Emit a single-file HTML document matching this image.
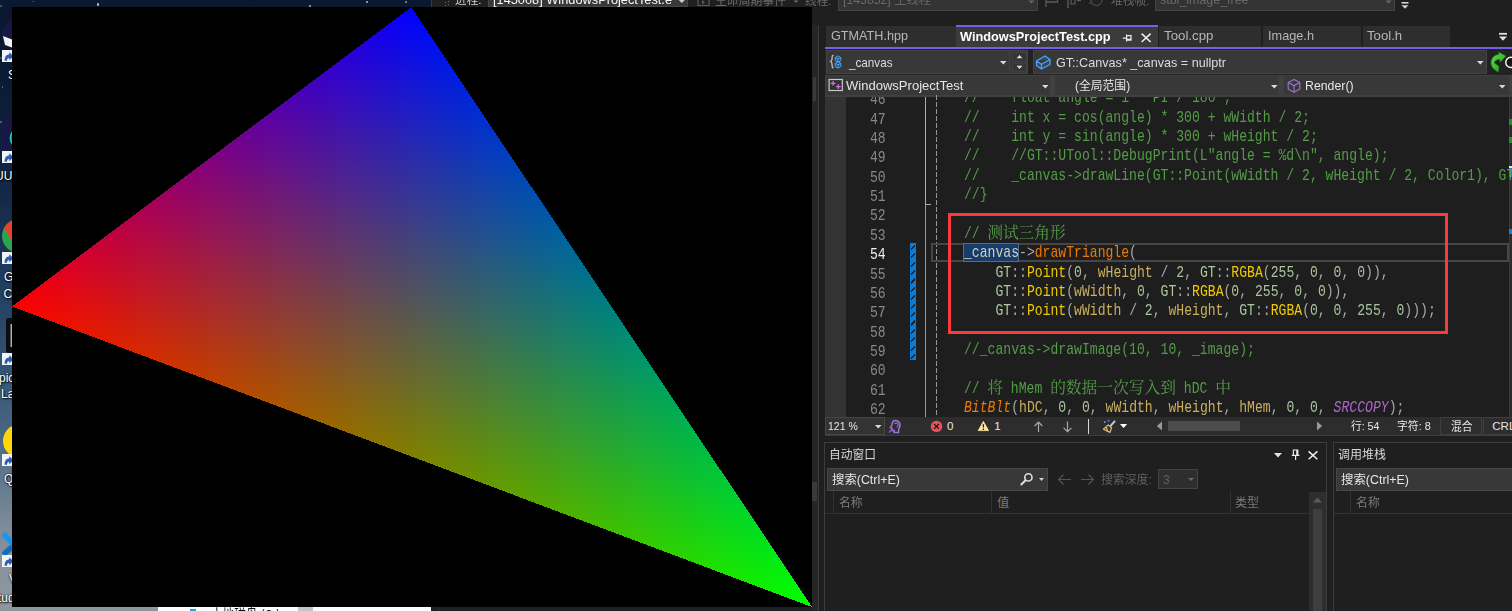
<!DOCTYPE html><html lang="zh-CN"><head><meta charset="utf-8"><title>WindowsProjectTest - Visual Studio</title><style>
html,body{margin:0;padding:0;background:#1f1f1f}body{position:relative;width:1512px;height:611px;overflow:hidden;font-family:"Liberation Sans","Noto Sans CJK SC",sans-serif}
.b{position:absolute;display:block}.t{position:absolute;white-space:pre;line-height:1;transform-origin:0 0}
#ed{position:absolute;left:825px;top:96.6px;width:687px;height:320.0px;overflow:hidden}
#ed .t{font-size:15.73px;opacity:.93}
</style></head><body>
<div class="b" style="left:0px;top:0px;width:432px;height:611px;background:linear-gradient(180deg,#0a1830 0px,#0b1a33 60px,#0d1f3b 130px,#142a48 200px,#1d3858 260px,#284768 320px,#37577a 380px,#48657f 430px,#57718a 460px,#687d90 490px,#7f8c9a 530px,#8a939e 570px,#8f979f 611px);"></div>
<div class="b" style="left:0.2px;top:5.2px;width:1.6px;height:1.6px;background:rgba(220,225,240,0.35);border-radius:50%;"></div>
<div class="b" style="left:32.2px;top:0.7px;width:1.6px;height:1.6px;background:rgba(220,225,240,0.25);border-radius:50%;"></div>
<div class="b" style="left:96.8px;top:3.4px;width:2.4px;height:2.4px;background:rgba(220,225,240,0.8);border-radius:50%;"></div>
<div class="b" style="left:0.2px;top:57.2px;width:1.6px;height:1.6px;background:rgba(220,225,240,0.3);border-radius:50%;"></div>
<div class="b" style="left:1.7px;top:86.2px;width:1.6px;height:1.6px;background:rgba(220,225,240,0.4);border-radius:50%;"></div>
<div class="b" style="left:308.9px;top:4.9px;width:2.2px;height:2.2px;background:rgba(220,225,240,0.75);border-radius:50%;"></div>
<div class="b" style="left:366px;top:1px;width:2px;height:2px;background:rgba(220,225,240,0.8);border-radius:50%;"></div>
<div class="b" style="left:405.1px;top:0.9px;width:1.8px;height:1.8px;background:rgba(220,225,240,0.6);border-radius:50%;"></div>
<div class="b" style="left:0.2px;top:121.2px;width:1.6px;height:1.6px;background:rgba(220,225,240,0.4);border-radius:50%;"></div>
<svg class="b" style="left:0px;top:18px" width="12" height="34" viewBox="0 0 12 34"><ellipse cx="19" cy="17" rx="17" ry="17" fill="#161845"/><path d="M3 18 L12 21.5 L12 29.5 L5 27 Z" fill="#f2f4f8"/></svg>
<div class="b" style="left:2px;top:50px;width:10px;height:12px;background:#f1f3f6;"></div>
<svg class="b" style="left:2px;top:50px" width="10" height="12" viewBox="0 0 10 12"><path d="M2.6 10.8 C2.6 6.6 4.4 4.6 7.2 4.6 L7.2 2.2 L11.6 6.4 L7.2 10.2 L7.2 8 C5.8 8 5 9 5 10.8 Z" fill="#2c5fb4"/></svg>
<svg class="b" style="left:0px;top:114px" width="12" height="38" viewBox="0 0 12 38"><rect x="2" y="2" width="30" height="36" rx="7" fill="#181844"/><circle cx="20" cy="24" r="9.4" stroke="#17c4b0" stroke-width="2.2" fill="none"/></svg>
<div class="b" style="left:2px;top:151px;width:10px;height:12px;background:#f1f3f6;"></div>
<svg class="b" style="left:2px;top:151px" width="10" height="12" viewBox="0 0 10 12"><path d="M2.6 10.8 C2.6 6.6 4.4 4.6 7.2 4.6 L7.2 2.2 L11.6 6.4 L7.2 10.2 L7.2 8 C5.8 8 5 9 5 10.8 Z" fill="#2c5fb4"/></svg>
<svg class="b" style="left:0px;top:218px" width="12" height="36" viewBox="0 0 12 36"><defs><clipPath id="chc"><circle cx="19" cy="18" r="17"/></clipPath></defs><circle cx="19" cy="18" r="17" fill="#2da44e"/><path d="M4 9.5 L14 27 L30 27 L30 0 L4 0 Z" fill="#e8412f" clip-path="url(#chc)"/></svg>
<div class="b" style="left:2px;top:252px;width:10px;height:12px;background:#f1f3f6;"></div>
<svg class="b" style="left:2px;top:252px" width="10" height="12" viewBox="0 0 10 12"><path d="M2.6 10.8 C2.6 6.6 4.4 4.6 7.2 4.6 L7.2 2.2 L11.6 6.4 L7.2 10.2 L7.2 8 C5.8 8 5 9 5 10.8 Z" fill="#2c5fb4"/></svg>
<svg class="b" style="left:0px;top:316px" width="12" height="38" viewBox="0 0 12 38"><rect x="6" y="2" width="26" height="35" rx="3" fill="#0c0c0e"/><rect x="10.6" y="8" width="1.2" height="23" fill="#d8d8d8"/></svg>
<div class="b" style="left:2px;top:353px;width:10px;height:12px;background:#f1f3f6;"></div>
<svg class="b" style="left:2px;top:353px" width="10" height="12" viewBox="0 0 10 12"><path d="M2.6 10.8 C2.6 6.6 4.4 4.6 7.2 4.6 L7.2 2.2 L11.6 6.4 L7.2 10.2 L7.2 8 C5.8 8 5 9 5 10.8 Z" fill="#2c5fb4"/></svg>
<svg class="b" style="left:0px;top:422px" width="12" height="36" viewBox="0 0 12 36"><circle cx="20" cy="19" r="17" fill="#ffd60a"/></svg>
<div class="b" style="left:2px;top:454px;width:10px;height:12px;background:#f1f3f6;"></div>
<svg class="b" style="left:2px;top:454px" width="10" height="12" viewBox="0 0 10 12"><path d="M2.6 10.8 C2.6 6.6 4.4 4.6 7.2 4.6 L7.2 2.2 L11.6 6.4 L7.2 10.2 L7.2 8 C5.8 8 5 9 5 10.8 Z" fill="#2c5fb4"/></svg>
<svg class="b" style="left:0px;top:529px" width="12" height="28" viewBox="0 0 12 28"><path d="M13.5 16.5 L5 24" stroke="#0b6fc2" stroke-width="5.4" stroke-linecap="round" fill="none"/><path d="M5 6.2 L13.5 15.5" stroke="#1a96ec" stroke-width="5.6" stroke-linecap="round" fill="none"/></svg>
<div class="b" style="left:2px;top:555px;width:10px;height:12px;background:#f1f3f6;"></div>
<svg class="b" style="left:2px;top:555px" width="10" height="12" viewBox="0 0 10 12"><path d="M2.6 10.8 C2.6 6.6 4.4 4.6 7.2 4.6 L7.2 2.2 L11.6 6.4 L7.2 10.2 L7.2 8 C5.8 8 5 9 5 10.8 Z" fill="#2c5fb4"/></svg>
<div class="b" style="left:0px;top:607px;width:158px;height:4px;background:#8d969d;"></div>
<div class="b" style="left:158px;top:607px;width:140px;height:4px;background:#ffffff;"></div>
<div class="b" style="left:298px;top:607px;width:15px;height:4px;background:#c4c4c4;"></div>
<div class="b" style="left:313px;top:607px;width:118px;height:4px;background:#fdfdfd;"></div>
<div class="b" style="left:190px;top:609px;width:6px;height:2px;background:#19a7e8;"></div>
<div class="b" style="left:431px;top:0px;width:1081px;height:611px;background:#1f1f1f;"></div>
<div class="b" style="left:431px;top:0px;width:1px;height:7px;background:#3a3a3a;"></div>
<div class="b" style="left:438px;top:607px;width:1px;height:4px;background:#333;"></div>
<div class="b" style="left:445px;top:-1px;width:1px;height:1px;background:#6a6a6a;"></div>
<div class="b" style="left:448px;top:0.5px;width:1px;height:1px;background:#6a6a6a;"></div>
<div class="b" style="left:445px;top:2px;width:1px;height:1px;background:#6a6a6a;"></div>
<div class="b" style="left:448px;top:3.5px;width:1px;height:1px;background:#6a6a6a;"></div>
<div class="b" style="left:445px;top:5px;width:1px;height:1px;background:#6a6a6a;"></div>
<div class="b" style="left:448px;top:6.5px;width:1px;height:1px;background:#6a6a6a;"></div>
<div class="b" style="left:488px;top:-14px;width:200px;height:21px;background:#383838;border:1px solid #464646;box-sizing:border-box;"></div>
<svg class="b" style="left:678px;top:0px" width="8" height="5" viewBox="0 0 8 5"><path d="M0.8 0 L6.8 0 L3.8 3 Z" fill="#d0d0d0"/></svg>
<svg class="b" style="left:697px;top:0px" width="14" height="7" viewBox="0 0 14 7"><path d="M1 0 V5.5 H12 V0" stroke="#5a5a5a" fill="none" stroke-width="1.2"/><path d="M5 0 L8 2.2 L5 4.4Z" fill="#5a5a5a"/></svg>
<svg class="b" style="left:793px;top:0px" width="6" height="4" viewBox="0 0 6 4"><path d="M0.5 0.5 L5.5 0.5 L3 3 Z" fill="#6a6a6a"/></svg>
<div class="b" style="left:838px;top:-11px;width:200px;height:21.5px;background:#333333;border:1px solid #434343;box-sizing:border-box;"></div>
<svg class="b" style="left:1028px;top:0px" width="8" height="5" viewBox="0 0 8 5"><path d="M0.5 0.5 L6.5 0.5 L3.5 3.5 Z" fill="#686868"/></svg>
<svg class="b" style="left:1044px;top:0px" width="16" height="9" viewBox="0 0 16 9"><path d="M2 0 V7" stroke="#5c5c5c" stroke-width="1.3" fill="none"/><path d="M2 2 H13.5 V0" stroke="#5c5c5c" stroke-width="1.3" fill="none"/></svg>
<svg class="b" style="left:1066px;top:0px" width="18" height="9" viewBox="0 0 18 9"><path d="M2 0 V8" stroke="#5c5c5c" stroke-width="1.3" fill="none"/><path d="M5 0 V4 H9 V0" stroke="#5c5c5c" stroke-width="1.2" fill="none"/><path d="M11 0.6 H15" stroke="#5c5c5c" stroke-width="1.2"/></svg>
<svg class="b" style="left:1088px;top:0px" width="16" height="6" viewBox="0 0 16 6"><path d="M1.5 4 L4 0 M3 0 A5.5 5.5 0 0 0 14 0" stroke="#4a4a4a" stroke-width="1.2" fill="none"/></svg>
<div class="b" style="left:1155px;top:-11px;width:240px;height:21.5px;background:#333333;border:1px solid #434343;box-sizing:border-box;"></div>
<svg class="b" style="left:1385px;top:0px" width="8" height="5" viewBox="0 0 8 5"><path d="M0.5 0.5 L6.5 0.5 L3.5 3.5 Z" fill="#686868"/></svg>
<svg class="b" style="left:1400px;top:1.3px" width="10" height="10" viewBox="0 0 10 10"><path d="M1.5 1.8 H8.5" stroke="#d0d0d0" stroke-width="1.6"/><path d="M1.5 4.2 L8.5 4.2 L5 7.8 Z" fill="#d0d0d0"/></svg>
<div class="b" style="left:812px;top:25px;width:6px;height:586px;background:#262626;"></div>
<div class="b" style="left:818px;top:25px;width:1px;height:586px;background:#3a3a3a;"></div>
<div class="b" style="left:813px;top:77px;width:3px;height:24px;background:#3a3a3a;"></div>
<div class="b" style="left:812px;top:482px;width:5px;height:19px;background:#3a3a3a;"></div>
<div class="b" style="left:826px;top:26px;width:130px;height:21px;background:#2e2e2e;"></div>
<div class="b" style="left:956px;top:25px;width:202px;height:22px;background:#3b3b3b;"></div>
<div class="b" style="left:956px;top:25px;width:202px;height:2px;background:#7160e8;"></div>
<svg class="b" style="left:1121px;top:31.5px" width="12" height="12" viewBox="0 0 12 12"><path d="M1.8 6 H5.6 M5.6 2.4 V9.6 M5.6 3.6 H10 V8 H5.6 M5.6 7.4 H10" stroke="#eaeaea" stroke-width="1.25" fill="none"/></svg>
<svg class="b" style="left:1140px;top:32.3px" width="12" height="12" viewBox="0 0 12 12"><path d="M1.6 1.6 L10.6 10 M10.6 1.6 L1.6 10" stroke="#f0f0f0" stroke-width="1.5" fill="none"/></svg>
<div class="b" style="left:1159px;top:26px;width:102px;height:21px;background:#2e2e2e;"></div>
<div class="b" style="left:1263px;top:26px;width:98px;height:21px;background:#2e2e2e;"></div>
<div class="b" style="left:1363px;top:26px;width:87px;height:21px;background:#2e2e2e;"></div>
<svg class="b" style="left:1498px;top:32px" width="10" height="10" viewBox="0 0 10 10"><path d="M1 1.8 H9" stroke="#e0e0e0" stroke-width="1.8"/><path d="M1 4.6 L9 4.6 L5 8.8 Z" fill="#e0e0e0"/></svg>
<div class="b" style="left:825px;top:47px;width:687px;height:2px;background:#7160e8;"></div>
<div class="b" style="left:825px;top:49px;width:687px;height:26.4px;background:#222222;"></div>
<div class="b" style="left:825px;top:75.4px;width:687px;height:21.2px;background:#404040;"></div>
<div class="b" style="left:826px;top:49.6px;width:202.3px;height:24.4px;background:#383838;border:1px solid #444444;box-sizing:border-box;"></div>
<div class="b" style="left:1009.4px;top:51px;width:1px;height:22px;background:#424242;"></div>
<div class="b" style="left:1012px;top:52px;width:15px;height:9.6px;background:#353535;border:1px solid #404040;box-sizing:border-box;"></div>
<div class="b" style="left:1012px;top:62.6px;width:15px;height:9.6px;background:#353535;border:1px solid #404040;box-sizing:border-box;"></div>
<svg class="b" style="left:829px;top:54px" width="16" height="16" viewBox="0 0 16 16"><path d="M4.6 1.3 C3 1.3 3.1 2.8 3.1 4.3 C3.1 5.8 2.9 7 1.6 7.5 C2.9 8 3.1 9.2 3.1 10.7 C3.1 12.3 3 13.8 4.6 13.8" stroke="#c4c4c4" stroke-width="1.25" fill="none"/><path d="M9 1.8999999999999995 L11.77 3.50 L11.77 6.70 L9 8.3 L6.23 6.70 L6.23 3.50 Z M9 5.1 L9 8.3 M9 5.1 L11.77 3.50 M9 5.1 L6.23 3.50" stroke="#4aa3f5" stroke-width="1.0" fill="#2d4966" stroke-linejoin="round"/><path d="M9 7.7 L11.77 9.30 L11.77 12.50 L9 14.100000000000001 L6.23 12.50 L6.23 9.30 Z M9 10.9 L9 14.100000000000001 M9 10.9 L11.77 9.30 M9 10.9 L6.23 9.30" stroke="#4aa3f5" stroke-width="1.0" fill="#2d4966" stroke-linejoin="round"/></svg>
<svg class="b" style="left:998.7px;top:59.6px" width="8.6" height="5.4" viewBox="0 0 8.6 5.4"><path d="M1 1 L7.6 1 L4.3 4.4 Z" fill="#dadada"/></svg>
<svg class="b" style="left:1015px;top:53px" width="9" height="7" viewBox="0 0 9 7"><path d="M1.6 5.2 L4.5 1.9 L7.4 5.2 Z" fill="#e0e0e0"/></svg>
<svg class="b" style="left:1015px;top:64px" width="9" height="7" viewBox="0 0 9 7"><path d="M1.6 1.8 L4.5 5.1 L7.4 1.8 Z" fill="#e0e0e0"/></svg>
<div class="b" style="left:1033px;top:49.6px;width:454px;height:24.4px;background:#383838;border:1px solid #444444;box-sizing:border-box;"></div>
<svg class="b" style="left:1035px;top:53px" width="17" height="18" viewBox="0 0 17 18"><path d="M1.5 8 L10 3 L15 6.5 L15 11.5 L6.5 16 L1.5 12.5 Z M1.5 8 L6.5 11.2 L15 6.5 M6.5 11.2 V16" stroke="#4aa3ff" stroke-width="1.3" fill="#34485e" stroke-linejoin="round"/></svg>
<svg class="b" style="left:1475.7px;top:59.6px" width="8.6" height="5.4" viewBox="0 0 8.6 5.4"><path d="M1 1 L7.6 1 L4.3 4.4 Z" fill="#dadada"/></svg>
<svg class="b" style="left:1489px;top:50px" width="23" height="24" viewBox="0 0 23 24"><defs><linearGradient id="gar" x1="0" y1="0" x2="1" y2="1"><stop offset="0" stop-color="#5fe04a"/><stop offset="1" stop-color="#1f9a1c"/></linearGradient></defs><path d="M9.5 2 L17 6 L11.3 12.2 L10.5 9.5 C7 9.5 5 11.5 5.5 13 L10 16.5 L9.5 22 C5 20.5 1.5 16 2 12 C2.5 7.5 6 4.5 10 4.5 Z" fill="url(#gar)" stroke="#167a14" stroke-width=".6"/><circle cx="21.9" cy="12.4" r="5.1" fill="#161616" stroke="#f2f2f2" stroke-width="1.5"/></svg>
<div class="b" style="left:826px;top:76px;width:224px;height:19px;background:#383838;"></div>
<svg class="b" style="left:828.4px;top:78px" width="16" height="14" viewBox="0 0 16 14"><rect x="1.1" y="1.5" width="13.2" height="11" fill="#303030" stroke="#c8c8c8" stroke-width="1.2"/><path d="M2.7 5.4 H7.5 M5.1 3 V7.8 M7.9 8.5 H12.7 M10.3 6.1 V10.9" stroke="#d36fe0" stroke-width="1.25"/></svg>
<svg class="b" style="left:1040.5px;top:83.8px" width="8.6" height="5.4" viewBox="0 0 8.6 5.4"><path d="M1 1 L7.6 1 L4.3 4.4 Z" fill="#dadada"/></svg>
<div class="b" style="left:1055px;top:76px;width:224px;height:19px;background:#383838;"></div>
<svg class="b" style="left:1269.7px;top:83.8px" width="8.6" height="5.4" viewBox="0 0 8.6 5.4"><path d="M1 1 L7.6 1 L4.3 4.4 Z" fill="#dadada"/></svg>
<div class="b" style="left:1284px;top:76px;width:225px;height:19px;background:#383838;"></div>
<svg class="b" style="left:1286px;top:78px" width="16" height="16" viewBox="0 0 16 16"><path d="M8 1.5 L13.8 4.5 V11 L8 14.2 L2.2 11 V4.5 Z M2.2 4.5 L8 7.6 L13.8 4.5 M8 7.6 V14.2" stroke="#9a6fd0" stroke-width="1.2" fill="none" stroke-linejoin="round"/></svg>
<svg class="b" style="left:1498.3px;top:83.8px" width="8.6" height="5.4" viewBox="0 0 8.6 5.4"><path d="M1 1 L7.6 1 L4.3 4.4 Z" fill="#dadada"/></svg>
<div class="b" style="left:825px;top:96.6px;width:687px;height:320px;background:#1e1e1e;"></div>
<div class="b" style="left:825px;top:96.6px;width:21px;height:320px;background:#333333;"></div>
<div class="b" style="left:1509px;top:96.6px;width:3px;height:320px;background:#2b2b2b;"></div>
<div class="b" style="left:1508.5px;top:96.6px;width:1px;height:320px;background:#3a3a3a;"></div>
<div class="b" style="left:1509px;top:119px;width:3px;height:6px;background:#2e8b2e;"></div>
<div class="b" style="left:1509px;top:137px;width:3px;height:6px;background:#2e8b2e;"></div>
<div class="b" style="left:1509px;top:166px;width:3px;height:11px;background:#1c7fd6;"></div>
<div class="b" style="left:1509px;top:166px;width:3px;height:2px;background:#e8e8e8;"></div>
<div class="b" style="left:1509px;top:229px;width:3px;height:5px;background:#1c7fd6;"></div>
<div class="b" style="left:924.5px;top:96.6px;width:1.8px;height:108.4px;background:#adadad;"></div>
<div class="b" style="left:924.6px;top:203.8px;width:6px;height:1.3px;background:#a8a8a8;"></div>
<div class="b" style="left:924.8px;top:205px;width:1.2px;height:211.6px;background:#9a9a9a;"></div>
<div class="b" style="left:935.7px;top:92.5px;width:1.5px;height:324.1px;background:repeating-linear-gradient(180deg,transparent 0 1.9px,#969696 1.9px 7px);"></div>
<div class="b" style="left:910.2px;top:243.2px;width:6.2px;height:117px;background:linear-gradient(90deg,#0a7bd6 0 1.4px,transparent 1.4px 4.8px,#0a7bd6 4.8px),repeating-linear-gradient(135deg,#0a7bd6 0 4.5px,#14202c 4.5px 5.94px);"></div>
<div class="b" style="left:931px;top:243.1px;width:577.7px;height:19.3px;border:2.5px solid #464646;box-sizing:border-box;"></div>
<div class="b" style="left:963.1px;top:243.2px;width:56.26px;height:19.3px;background:#193d6b;border:1px solid #4a6d99;box-sizing:border-box;"></div>
<div class="b" style="left:825px;top:416.6px;width:687px;height:18.6px;background:#2d2d2d;"></div>
<div class="b" style="left:825px;top:435px;width:687px;height:1px;background:#3d3d3d;"></div>
<div class="b" style="left:825px;top:417px;width:60px;height:18px;background:#333333;border:1px solid #464646;box-sizing:border-box;"></div>
<svg class="b" style="left:874.2px;top:423.6px" width="8.6" height="5.4" viewBox="0 0 8.6 5.4"><path d="M1 1 L7.6 1 L4.3 4.4 Z" fill="#dadada"/></svg>
<svg class="b" style="left:887px;top:419px" width="15" height="15" viewBox="0 0 15 15"><path d="M7.8 1.5 C11 1.5 13 3.6 13 6.4 C13 8.2 12.2 9.2 11.6 10 L11.6 13.5 L7.2 13.5 L7.2 11.6 L5 11.6 L5 9.2 L3.4 8.6 L5 5.8 C5.2 3.2 6.4 1.5 7.8 1.5 Z" fill="none" stroke="#a074d6" stroke-width="1.5"/><path d="M2 13.5 L6 9.5 M7.5 5 A2 2 0 1 1 9.6 8" stroke="#8a5cc8" stroke-width="1.5" fill="none"/></svg>
<svg class="b" style="left:930px;top:420px" width="13" height="13" viewBox="0 0 13 13"><circle cx="6.5" cy="6.4" r="5.7" fill="#ee4f5c"/><path d="M4 3.9 L9 8.9 M9 3.9 L4 8.9" stroke="#111" stroke-width="1.15"/></svg>
<svg class="b" style="left:977px;top:420px" width="13" height="12" viewBox="0 0 13 12"><path d="M6.4 1.4 L11.6 10.6 H1.2 Z" fill="#ffe3a0" stroke="#ffe3a0" stroke-width=".8" stroke-linejoin="round"/><path d="M6.4 4.2 V7.6 M6.4 8.6 V9.9" stroke="#1a1a1a" stroke-width="1.3"/></svg>
<svg class="b" style="left:1033px;top:420px" width="11" height="13" viewBox="0 0 11 13"><path d="M5.5 2.2 V12 M1.6 6 L5.5 2.1 L9.4 6" stroke="#a8a8a8" stroke-width="1.2" fill="none"/></svg>
<svg class="b" style="left:1061.5px;top:420px" width="11" height="13" viewBox="0 0 11 13"><path d="M5.5 1.6 V11.6 M1.6 7.8 L5.5 11.7 L9.4 7.8" stroke="#a8a8a8" stroke-width="1.2" fill="none"/></svg>
<div class="b" style="left:1088px;top:419px;width:1.3px;height:14.5px;background:#d8d8d8;"></div>
<svg class="b" style="left:1102px;top:419px" width="15" height="15" viewBox="0 0 15 15"><path d="M13 1.8 L8.4 7.2" stroke="#cfcfcf" stroke-width="1.9"/><path d="M6.2 5.9 L9.6 8.8 L8 13.4 L1.4 10.2 Z M4.2 8.2 L5.6 12" fill="#3a352a" stroke="#dcbc78" stroke-width="1.2" stroke-linejoin="round"/><path d="M2.8 1.8 L4 3 L2.8 4.2 L1.6 3 Z" fill="#3fa0ff"/><path d="M6.6 .4 L7.9 1.7 L6.6 3 L5.3 1.7 Z" fill="#6f6ae0"/></svg>
<svg class="b" style="left:1119.0px;top:423.0px" width="9.2" height="6" viewBox="0 0 9.2 6"><path d="M1 1 L8.2 1 L4.6 5 Z" fill="#ffffff"/></svg>
<svg class="b" style="left:1156px;top:421px" width="7" height="10" viewBox="0 0 7 10"><path d="M6 0.5 L0.8 5 L6 9.5 Z" fill="#9a9a9a"/></svg>
<div class="b" style="left:1168px;top:421px;width:72px;height:10px;background:#4d4d4d;"></div>
<svg class="b" style="left:1316px;top:421px" width="7" height="10" viewBox="0 0 7 10"><path d="M1 0.5 L6.2 5 L1 9.5 Z" fill="#9a9a9a"/></svg>
<div class="b" style="left:1440px;top:417px;width:41.5px;height:18px;background:#2d2d2d;border:1px solid #3f3f3f;box-sizing:border-box;"></div>
<div class="b" style="left:1483px;top:417px;width:40px;height:18px;background:#2d2d2d;border:1px solid #3f3f3f;box-sizing:border-box;"></div>
<div class="b" style="left:824px;top:442px;width:503px;height:180px;background:#1f1f1f;border:1px solid #3d3d3d;box-sizing:border-box;"></div>
<svg class="b" style="left:1272.8px;top:451.9px" width="10" height="6.6" viewBox="0 0 10 6.6"><path d="M1 1 L9 1 L5.0 5.6 Z" fill="#e4e4e4"/></svg>
<svg class="b" style="left:1290px;top:448px" width="11" height="13" viewBox="0 0 11 13"><path d="M3.4 2 H7.8 V7.4 H3.4 Z M6.8 2 V7.4 M1.8 7.4 H9.4 M5.6 7.4 V12" stroke="#e8e8e8" stroke-width="1.2" fill="none"/></svg>
<svg class="b" style="left:1307px;top:449px" width="12" height="12" viewBox="0 0 12 12"><path d="M1.6 2.4 L10.4 10.2 M10.4 2.4 L1.6 10.2" stroke="#f0f0f0" stroke-width="1.5" fill="none"/></svg>
<div class="b" style="left:827px;top:468px;width:221px;height:23px;background:#383838;border:1px solid #464646;box-sizing:border-box;"></div>
<svg class="b" style="left:1019px;top:472px" width="15" height="15" viewBox="0 0 15 15"><circle cx="9.4" cy="5.4" r="3.6" stroke="#e0e0e0" stroke-width="1.6" fill="none"/><path d="M6.8 8 L1.8 13" stroke="#e0e0e0" stroke-width="2"/></svg>
<svg class="b" style="left:1037.5px;top:477.0px" width="7" height="5" viewBox="0 0 7 5"><path d="M1 1 L6 1 L3.5 4 Z" fill="#d0d0d0"/></svg>
<svg class="b" style="left:1057px;top:473px" width="15" height="13" viewBox="0 0 15 13"><path d="M14 6.5 H1.5 M6.5 1.5 L1.5 6.5 L6.5 11.5" stroke="#555" stroke-width="1.1" fill="none"/></svg>
<svg class="b" style="left:1080px;top:473px" width="15" height="13" viewBox="0 0 15 13"><path d="M1 6.5 H13.5 M8.5 1.5 L13.5 6.5 L8.5 11.5" stroke="#555" stroke-width="1.1" fill="none"/></svg>
<div class="b" style="left:1158px;top:469px;width:40px;height:20px;background:#2e2e2e;border:1px solid #434343;box-sizing:border-box;"></div>
<svg class="b" style="left:1186.5px;top:477.0px" width="8" height="5" viewBox="0 0 8 5"><path d="M1 1 L7 1 L4.0 4 Z" fill="#6a6a6a"/></svg>
<div class="b" style="left:825px;top:512.5px;width:484px;height:1px;background:#333;"></div>
<div class="b" style="left:833px;top:491px;width:1px;height:22px;background:#333;"></div>
<div class="b" style="left:991px;top:491px;width:1px;height:22px;background:#333;"></div>
<div class="b" style="left:1230px;top:491px;width:1px;height:22px;background:#333;"></div>
<div class="b" style="left:1309px;top:492px;width:17px;height:130px;background:#2e2e2e;"></div>
<svg class="b" style="left:1312px;top:496px" width="11" height="8" viewBox="0 0 11 8"><path d="M1 6.5 L5.5 1.5 L10 6.5 Z" fill="#5a5a5a"/></svg>
<div class="b" style="left:1313px;top:509px;width:9px;height:110px;background:#3e3e3e;"></div>
<div class="b" style="left:1333px;top:442px;width:200px;height:180px;background:#1f1f1f;border:1px solid #3d3d3d;box-sizing:border-box;"></div>
<div class="b" style="left:1336px;top:468px;width:190px;height:23px;background:#383838;border:1px solid #464646;box-sizing:border-box;"></div>
<div class="b" style="left:1334px;top:512.5px;width:180px;height:1px;background:#333;"></div>
<div class="b" style="left:1350px;top:491px;width:1px;height:22px;background:#333;"></div>
<div id="ed"><span class="t" style="left:45.00px;top:-3.46px;color:#8f8f8f;font-family:'Liberation Mono','Noto Serif CJK SC',monospace;transform:scaleX(0.8334)">46</span><span class="t" style="left:45.00px;top:16.54px;color:#8f8f8f;font-family:'Liberation Mono','Noto Serif CJK SC',monospace;transform:scaleX(0.8334)">47</span><span class="t" style="left:45.00px;top:35.53px;color:#8f8f8f;font-family:'Liberation Mono','Noto Serif CJK SC',monospace;transform:scaleX(0.8334)">48</span><span class="t" style="left:45.00px;top:54.53px;color:#8f8f8f;font-family:'Liberation Mono','Noto Serif CJK SC',monospace;transform:scaleX(0.8334)">49</span><span class="t" style="left:45.00px;top:74.53px;color:#8f8f8f;font-family:'Liberation Mono','Noto Serif CJK SC',monospace;transform:scaleX(0.8334)">50</span><span class="t" style="left:45.00px;top:93.53px;color:#8f8f8f;font-family:'Liberation Mono','Noto Serif CJK SC',monospace;transform:scaleX(0.8334)">51</span><span class="t" style="left:45.00px;top:112.53px;color:#8f8f8f;font-family:'Liberation Mono','Noto Serif CJK SC',monospace;transform:scaleX(0.8334)">52</span><span class="t" style="left:45.00px;top:132.53px;color:#8f8f8f;font-family:'Liberation Mono','Noto Serif CJK SC',monospace;transform:scaleX(0.8334)">53</span><span class="t" style="left:45.00px;top:151.53px;color:#ffffff;font-family:'Liberation Mono','Noto Serif CJK SC',monospace;transform:scaleX(0.8334)">54</span><span class="t" style="left:45.00px;top:171.53px;color:#8f8f8f;font-family:'Liberation Mono','Noto Serif CJK SC',monospace;transform:scaleX(0.8334)">55</span><span class="t" style="left:45.00px;top:190.53px;color:#8f8f8f;font-family:'Liberation Mono','Noto Serif CJK SC',monospace;transform:scaleX(0.8334)">56</span><span class="t" style="left:45.00px;top:209.53px;color:#8f8f8f;font-family:'Liberation Mono','Noto Serif CJK SC',monospace;transform:scaleX(0.8334)">57</span><span class="t" style="left:45.00px;top:229.53px;color:#8f8f8f;font-family:'Liberation Mono','Noto Serif CJK SC',monospace;transform:scaleX(0.8334)">58</span><span class="t" style="left:45.00px;top:248.53px;color:#8f8f8f;font-family:'Liberation Mono','Noto Serif CJK SC',monospace;transform:scaleX(0.8334)">59</span><span class="t" style="left:45.00px;top:267.53px;color:#8f8f8f;font-family:'Liberation Mono','Noto Serif CJK SC',monospace;transform:scaleX(0.8334)">60</span><span class="t" style="left:45.00px;top:287.53px;color:#8f8f8f;font-family:'Liberation Mono','Noto Serif CJK SC',monospace;transform:scaleX(0.8334)">61</span><span class="t" style="left:45.00px;top:306.53px;color:#8f8f8f;font-family:'Liberation Mono','Noto Serif CJK SC',monospace;transform:scaleX(0.8334)">62</span><span class="t" style="left:138.60px;top:-5.46px;font-family:'Liberation Mono','Noto Serif CJK SC',monospace;transform:scaleX(0.8334)"><span style="color:#57a64a">//    float angle = i * PI / 180 ;</span></span><span class="t" style="left:138.60px;top:14.54px;font-family:'Liberation Mono','Noto Serif CJK SC',monospace;transform:scaleX(0.8334)"><span style="color:#57a64a">//    int x = cos(angle) * 300 + wWidth / 2;</span></span><span class="t" style="left:138.60px;top:33.53px;font-family:'Liberation Mono','Noto Serif CJK SC',monospace;transform:scaleX(0.8334)"><span style="color:#57a64a">//    int y = sin(angle) * 300 + wHeight / 2;</span></span><span class="t" style="left:138.60px;top:52.53px;font-family:'Liberation Mono','Noto Serif CJK SC',monospace;transform:scaleX(0.8334)"><span style="color:#57a64a">//    //GT::UTool::DebugPrint(L"angle = %d\n", angle);</span></span><span class="t" style="left:138.60px;top:72.53px;font-family:'Liberation Mono','Noto Serif CJK SC',monospace;transform:scaleX(0.8334)"><span style="color:#57a64a">//    _canvas-&gt;drawLine(GT::Point(wWidth / 2, wHeight / 2, Color1), GT</span></span><span class="t" style="left:138.60px;top:91.53px;font-family:'Liberation Mono','Noto Serif CJK SC',monospace;transform:scaleX(0.8334)"><span style="color:#57a64a">//}</span></span><span class="t" style="left:138.60px;top:130.53px;font-family:'Liberation Mono','Noto Serif CJK SC',monospace;transform:scaleX(0.8334)"><span style="color:#57a64a">// </span></span><span class="t" style="left:162.20px;top:128.44px;font-family:'Liberation Serif','Noto Serif CJK SC',serif"><span style="color:#57a64a">测试三角形</span></span><span class="t" style="left:138.60px;top:149.53px;font-family:'Liberation Mono','Noto Serif CJK SC',monospace;transform:scaleX(0.8334)"><span style="color:#dcdcc0">_canvas</span><span style="color:#b4b4b4">-&gt;</span><span style="color:#ff8000">drawTriangle</span><span style="color:#b4b4b4">(</span></span><span class="t" style="left:138.60px;top:169.53px;font-family:'Liberation Mono','Noto Serif CJK SC',monospace;transform:scaleX(0.8334)"><span style="color:#c8c8c8">    </span><span style="color:#b8d7a3">GT</span><span style="color:#b4b4b4">::</span><span style="color:#ffd700">Point</span><span style="color:#b4b4b4">(</span><span style="color:#b5cea8">0</span><span style="color:#b4b4b4">, </span><span style="color:#d8bb62">wHeight</span><span style="color:#b4b4b4"> / </span><span style="color:#b5cea8">2</span><span style="color:#b4b4b4">, </span><span style="color:#b8d7a3">GT</span><span style="color:#b4b4b4">::</span><span style="color:#ffd700">RGBA</span><span style="color:#b4b4b4">(</span><span style="color:#b5cea8">255</span><span style="color:#b4b4b4">, </span><span style="color:#b5cea8">0</span><span style="color:#b4b4b4">, </span><span style="color:#b5cea8">0</span><span style="color:#b4b4b4">, </span><span style="color:#b5cea8">0</span><span style="color:#b4b4b4">)),</span></span><span class="t" style="left:138.60px;top:188.53px;font-family:'Liberation Mono','Noto Serif CJK SC',monospace;transform:scaleX(0.8334)"><span style="color:#c8c8c8">    </span><span style="color:#b8d7a3">GT</span><span style="color:#b4b4b4">::</span><span style="color:#ffd700">Point</span><span style="color:#b4b4b4">(</span><span style="color:#d8bb62">wWidth</span><span style="color:#b4b4b4">, </span><span style="color:#b5cea8">0</span><span style="color:#b4b4b4">, </span><span style="color:#b8d7a3">GT</span><span style="color:#b4b4b4">::</span><span style="color:#ffd700">RGBA</span><span style="color:#b4b4b4">(</span><span style="color:#b5cea8">0</span><span style="color:#b4b4b4">, </span><span style="color:#b5cea8">255</span><span style="color:#b4b4b4">, </span><span style="color:#b5cea8">0</span><span style="color:#b4b4b4">, </span><span style="color:#b5cea8">0</span><span style="color:#b4b4b4">)),</span></span><span class="t" style="left:138.60px;top:207.53px;font-family:'Liberation Mono','Noto Serif CJK SC',monospace;transform:scaleX(0.8334)"><span style="color:#c8c8c8">    </span><span style="color:#b8d7a3">GT</span><span style="color:#b4b4b4">::</span><span style="color:#ffd700">Point</span><span style="color:#b4b4b4">(</span><span style="color:#d8bb62">wWidth</span><span style="color:#b4b4b4"> / </span><span style="color:#b5cea8">2</span><span style="color:#b4b4b4">, </span><span style="color:#d8bb62">wHeight</span><span style="color:#b4b4b4">, </span><span style="color:#b8d7a3">GT</span><span style="color:#b4b4b4">::</span><span style="color:#ffd700">RGBA</span><span style="color:#b4b4b4">(</span><span style="color:#b5cea8">0</span><span style="color:#b4b4b4">, </span><span style="color:#b5cea8">0</span><span style="color:#b4b4b4">, </span><span style="color:#b5cea8">255</span><span style="color:#b4b4b4">, </span><span style="color:#b5cea8">0</span><span style="color:#b4b4b4">)));</span></span><span class="t" style="left:138.60px;top:246.53px;font-family:'Liberation Mono','Noto Serif CJK SC',monospace;transform:scaleX(0.8334)"><span style="color:#57a64a">//_canvas-&gt;drawImage(10, 10, _image);</span></span><span class="t" style="left:138.60px;top:285.53px;font-family:'Liberation Mono','Noto Serif CJK SC',monospace;transform:scaleX(0.8334)"><span style="color:#57a64a">// </span></span><span class="t" style="left:162.20px;top:283.43px;font-family:'Liberation Serif','Noto Serif CJK SC',serif"><span style="color:#57a64a">将</span></span><span class="t" style="left:177.93px;top:285.53px;font-family:'Liberation Mono','Noto Serif CJK SC',monospace;transform:scaleX(0.8334)"><span style="color:#57a64a"> hMem </span></span><span class="t" style="left:225.13px;top:283.43px;font-family:'Liberation Serif','Noto Serif CJK SC',serif"><span style="color:#57a64a">的数据一次写入到</span></span><span class="t" style="left:350.98px;top:285.53px;font-family:'Liberation Mono','Noto Serif CJK SC',monospace;transform:scaleX(0.8334)"><span style="color:#57a64a"> hDC </span></span><span class="t" style="left:390.31px;top:283.43px;font-family:'Liberation Serif','Noto Serif CJK SC',serif"><span style="color:#57a64a">中</span></span><span class="t" style="left:138.60px;top:304.53px;font-family:'Liberation Mono','Noto Serif CJK SC',monospace;transform:scaleX(0.8334)"><span style="color:#ff8000;font-style:italic">BitBlt</span><span style="color:#b4b4b4">(</span><span style="color:#d8bb62">hDC</span><span style="color:#b4b4b4">, </span><span style="color:#b5cea8">0</span><span style="color:#b4b4b4">, </span><span style="color:#b5cea8">0</span><span style="color:#b4b4b4">, </span><span style="color:#d8bb62">wWidth</span><span style="color:#b4b4b4">, </span><span style="color:#d8bb62">wHeight</span><span style="color:#b4b4b4">, </span><span style="color:#d8bb62">hMem</span><span style="color:#b4b4b4">, </span><span style="color:#b5cea8">0</span><span style="color:#b4b4b4">, </span><span style="color:#b5cea8">0</span><span style="color:#b4b4b4">, </span><span style="color:#b56bd6;font-style:italic">SRCCOPY</span><span style="color:#b4b4b4">);</span></span></div>
<span class="t" id="t0" style="left:8.00px;top:69.00px;font-size:12px;color:#ffffff;text-shadow:0 0 2px #000,1px 1px 2px #000;">S</span>
<span class="t" id="t1" style="left:-5.00px;top:170.00px;font-size:12px;color:#ffffff;text-shadow:0 0 2px #000,1px 1px 2px #000;">UU</span>
<span class="t" id="t2" style="left:4.00px;top:271.00px;font-size:12px;color:#ffffff;text-shadow:0 0 2px #000,1px 1px 2px #000;">G</span>
<span class="t" id="t3" style="left:3.50px;top:288.00px;font-size:12px;color:#ffffff;text-shadow:0 0 2px #000,1px 1px 2px #000;">C</span>
<span class="t" id="t4" style="left:-1.00px;top:372.00px;font-size:12px;color:#ffffff;text-shadow:0 0 2px #000,1px 1px 2px #000;">pic</span>
<span class="t" id="t5" style="left:1.00px;top:388.00px;font-size:12px;color:#ffffff;text-shadow:0 0 2px #000,1px 1px 2px #000;">La</span>
<span class="t" id="t6" style="left:4.00px;top:473.00px;font-size:12px;color:#ffffff;text-shadow:0 0 2px #000,1px 1px 2px #000;">Q</span>
<span class="t" id="t7" style="left:9.00px;top:573.00px;font-size:12px;color:#ffffff;text-shadow:0 0 2px #000,1px 1px 2px #000;">V</span>
<span class="t" id="t8" style="left:-2.00px;top:592.00px;font-size:12px;color:#ffffff;text-shadow:0 0 2px #000,1px 1px 2px #000;">tud</span>
<span class="t" id="t9" style="left:211.00px;top:608.25px;font-size:14.5px;color:#111;transform:scaleX(0.8006);">本地磁盘 (C:)</span>
<span class="t" id="t10" style="left:455.00px;top:-5.80px;font-size:12px;color:#d0d0d0;transform:scaleX(0.9691);">进程:</span>
<span class="t" id="t11" style="left:493.00px;top:-5.80px;font-size:12px;color:#fafafa;transform:scaleX(1.0649);">[145008] WindowsProjectTest.e</span>
<span class="t" id="t12" style="left:715.00px;top:-5.40px;font-size:12px;color:#6a6a6a;transform:scaleX(0.9859);">生命周期事件</span>
<span class="t" id="t13" style="left:804.50px;top:-5.40px;font-size:12px;color:#6a6a6a;transform:scaleX(0.9691);">线程:</span>
<span class="t" id="t14" style="left:843.00px;top:-5.60px;font-size:12px;color:#686868;transform:scaleX(1.0227);">[143852] 主线程</span>
<span class="t" id="t15" style="left:1110.50px;top:-5.40px;font-size:12px;color:#6a6a6a;transform:scaleX(0.9786);">堆栈帧:</span>
<span class="t" id="t16" style="left:1160.00px;top:-5.80px;font-size:12px;color:#686868;transform:scaleX(1.0364);">stbi_image_free</span>
<span class="t" id="t17" style="left:830.50px;top:29.00px;font-size:13px;color:#b6b6b6;transform:scaleX(0.9720);">GTMATH.hpp</span>
<span class="t" id="t18" style="left:960.20px;top:30.00px;font-size:13px;color:#ffffff;font-weight:700;transform:scaleX(0.9811);">WindowsProjectTest.cpp</span>
<span class="t" id="t19" style="left:1164.00px;top:29.00px;font-size:13px;color:#b6b6b6;transform:scaleX(1.0202);">Tool.cpp</span>
<span class="t" id="t20" style="left:1268.00px;top:29.00px;font-size:13px;color:#b6b6b6;transform:scaleX(0.9790);">Image.h</span>
<span class="t" id="t21" style="left:1367.40px;top:29.00px;font-size:13px;color:#b6b6b6;transform:scaleX(1.0143);">Tool.h</span>
<span class="t" id="t22" style="left:849.20px;top:56.20px;font-size:13px;color:#dcdcdc;transform:scaleX(0.8984);">_canvas</span>
<span class="t" id="t23" style="left:1056.00px;top:56.20px;font-size:13px;color:#dcdcdc;transform:scaleX(0.9701);">GT::Canvas* _canvas = nullptr</span>
<span class="t" id="t24" style="left:846.00px;top:79.00px;font-size:13px;color:#e6e6e6;transform:scaleX(1.0022);">WindowsProjectTest</span>
<span class="t" id="t25" style="left:1075.40px;top:79.75px;font-size:12.5px;color:#e6e6e6;transform:scaleX(0.9447);">(全局范围)</span>
<span class="t" id="t26" style="left:1304.70px;top:79.00px;font-size:13px;color:#e6e6e6;transform:scaleX(0.9474);">Render()</span>
<span class="t" id="t44" style="left:827.70px;top:419.90px;font-size:11.6px;color:#e6e6e6;transform:scaleX(0.9065);">121 %</span>
<span class="t" id="t45" style="left:947.00px;top:419.90px;font-size:11.6px;color:#e6e6e6;">0</span>
<span class="t" id="t46" style="left:994.30px;top:419.90px;font-size:11.6px;color:#e6e6e6;">1</span>
<span class="t" id="t47" style="left:1350.50px;top:419.90px;font-size:11.6px;color:#e6e6e6;transform:scaleX(0.9212);">行: 54</span>
<span class="t" id="t48" style="left:1397.30px;top:419.90px;font-size:11.6px;color:#e6e6e6;transform:scaleX(0.9341);">字符: 8</span>
<span class="t" id="t49" style="left:1450.50px;top:420.50px;font-size:12px;color:#e6e6e6;transform:scaleX(0.8953);">混合</span>
<span class="t" id="t50" style="left:1492.20px;top:419.90px;font-size:11.6px;color:#e6e6e6;">CRLF</span>
<span class="t" id="t51" style="left:829.40px;top:449.30px;font-size:12px;color:#d6d6d6;transform:scaleX(0.9809);">自动窗口</span>
<span class="t" id="t52" style="left:831.80px;top:474.00px;font-size:12px;color:#e6e6e6;transform:scaleX(1.0324);">搜索(Ctrl+E)</span>
<span class="t" id="t53" style="left:1101.20px;top:474.00px;font-size:12px;color:#5e5e5e;transform:scaleX(0.9894);">搜索深度:</span>
<span class="t" id="t54" style="left:1163.00px;top:473.80px;font-size:12px;color:#5e5e5e;">3</span>
<span class="t" id="t55" style="left:839.30px;top:497.00px;font-size:12px;color:#7a7a7a;transform:scaleX(0.9869);">名称</span>
<span class="t" id="t56" style="left:997.20px;top:497.00px;font-size:12px;color:#7a7a7a;">值</span>
<span class="t" id="t57" style="left:1235.00px;top:497.00px;font-size:12px;color:#7a7a7a;transform:scaleX(0.9993);">类型</span>
<span class="t" id="t58" style="left:1338.00px;top:449.30px;font-size:12px;color:#d6d6d6;transform:scaleX(0.9997);">调用堆栈</span>
<span class="t" id="t59" style="left:1341.00px;top:474.00px;font-size:12px;color:#e6e6e6;transform:scaleX(1.0355);">搜索(Ctrl+E)</span>
<span class="t" id="t60" style="left:1356.20px;top:497.00px;font-size:12px;color:#7a7a7a;transform:scaleX(0.9910);">名称</span>
<svg class="b" style="left:0;top:0" width="1512" height="611" shape-rendering="crispEdges"><defs><linearGradient id="gr" gradientUnits="userSpaceOnUse" x1="12.00" y1="306.50" x2="426.46" y2="29.71"><stop offset="0" stop-color="#ff0000"/><stop offset="1" stop-color="#000"/></linearGradient><linearGradient id="gg" gradientUnits="userSpaceOnUse" x1="812.00" y1="607.00" x2="379.73" y2="30.68"><stop offset="0" stop-color="#00ff00"/><stop offset="1" stop-color="#000"/></linearGradient><linearGradient id="gb" gradientUnits="userSpaceOnUse" x1="411.30" y1="7.00" x2="263.34" y2="400.91"><stop offset="0" stop-color="#0000ff"/><stop offset="1" stop-color="#000"/></linearGradient></defs><g style="isolation:isolate"><rect x="12" y="7" width="800" height="600" fill="#000"/><polygon points="12.0,306.5 411.3,7.0 812.0,607.0" fill="url(#gr)"/><polygon points="12.0,306.5 411.3,7.0 812.0,607.0" fill="url(#gg)" style="mix-blend-mode:screen"/><polygon points="12.0,306.5 411.3,7.0 812.0,607.0" fill="url(#gb)" style="mix-blend-mode:screen"/></g></svg>
<div class="b" style="left:947.9px;top:213px;width:500.2px;height:121.2px;border:3.1px solid #fb3a3c;box-sizing:border-box"></div>
</body></html>
